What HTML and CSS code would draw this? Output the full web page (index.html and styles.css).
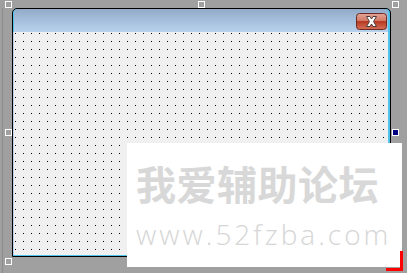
FILE: index.html
```html
<!DOCTYPE html>
<html>
<head>
<meta charset="utf-8">
<link rel="stylesheet" href="styles.css">
</head>
<body>
<div class="canvas">
  <div class="guide"></div>
  <div class="form">
    <div class="titlebar">
      <div class="close">
        <svg width="31" height="17" viewBox="0 0 31 17">
          <defs>
            <linearGradient id="cg" x1="0" y1="0" x2="0" y2="1">
              <stop offset="0" stop-color="#e3a597"/>
              <stop offset="0.45" stop-color="#d27a66"/>
              <stop offset="0.5" stop-color="#b83a22"/>
              <stop offset="1" stop-color="#d5705a"/>
            </linearGradient>
          </defs>
          <rect x="0.5" y="0.5" width="30" height="16" rx="3" ry="3" fill="url(#cg)" stroke="#6b2a20"/>
          <path d="M10.5 3.5 L14 3.5 L15.5 6 L17 3.5 L20.5 3.5 L17.5 8.5 L20.5 13.5 L17 13.5 L15.5 11 L14 13.5 L10.5 13.5 L13.5 8.5 Z" fill="#ffffff" stroke="#4a3a38" stroke-width="1" stroke-linejoin="round"/>
        </svg>
      </div>
    </div>
    <div class="client"></div>
  </div>
  <span class="handle h-tl"></span>
  <span class="handle h-tm"></span>
  <span class="handle h-tr"></span>
  <span class="handle h-ml"></span>
  <span class="handle h-mr active"></span>
  <span class="handle h-bl"></span>
  <div class="watermark">
    <div class="wm-cn">我爱辅助论坛</div>
    <div class="wm-url">www.52fzba.com</div>
  </div>
  <span class="corner-v"></span>
  <span class="corner-h"></span>
</div>
</body>
</html>
```
FILE: styles.css
```css
html, body {
  margin: 0;
  padding: 0;
}
body {
  width: 407px;
  height: 273px;
  overflow: hidden;
  background: #a0a0a0;
}
.canvas {
  position: relative;
  width: 407px;
  height: 273px;
  box-sizing: border-box;
  padding: 8px 0 0 12px;
}
.guide {
  position: absolute;
  left: 2px;
  top: 8px;
  bottom: 0;
  width: 1px;
  background: #8c8c8c;
}
.form {
  width: 379px;
  height: 249px;
  box-sizing: border-box;
  border: 1px solid #000;
  border-radius: 5px 5px 0 0;
  background: #4fc3ec;
  display: flex;
  flex-direction: column;
  overflow: hidden;
}
.titlebar {
  height: 23px;
  flex: none;
  margin: 0 2px 0 1px;
  background: linear-gradient(#93abc9, #b8d2ee);
  display: flex;
  justify-content: flex-end;
  align-items: flex-start;
  padding: 4px 1px 0 0;
  box-sizing: border-box;
  border-radius: 4px 4px 0 0;
}
.close {
  width: 31px;
  height: 17px;
}
.close svg {
  display: block;
}
.client {
  flex: 1;
  margin: 0 2px 1px 0;
  border-left: 1px solid #b9d1ea;
  background-color: #f0f0f0;
  background-image:
    linear-gradient(90deg, #f0f0f0 7px, transparent 7px),
    linear-gradient(#f0f0f0 7px, #000 7px);
  background-size: 8px 8px;
  background-position: 2px 2px;
  background-clip: content-box;
  background-origin: content-box;
}
.handle {
  position: absolute;
  width: 7px;
  height: 7px;
  box-sizing: border-box;
  border: 1px solid #fff;
}
.handle.active {
  background: #000080;
}
.h-tl { left: 5px; top: 1px; }
.h-tm { left: 198px; top: 1px; }
.h-tr { left: 392px; top: 1px; }
.h-ml { left: 5px; top: 129px; }
.h-mr { left: 392px; top: 129px; }
.h-bl { left: 5px; top: 258px; }
.watermark {
  position: absolute;
  left: 127px;
  top: 143px;
  width: 275px;
  height: 124px;
  background: #fff;
  box-sizing: border-box;
  padding: 20px 0 0 9px;
}
.wm-cn {
  font-family: "Noto Sans CJK SC", sans-serif;
  font-weight: 700;
  font-size: 40px;
  line-height: 40px;
  letter-spacing: 0.5px;
  color: #d8d8d8;
  white-space: nowrap;
}
.wm-url {
  margin-top: 19px;
  font-family: "Open Sans", sans-serif;
  font-weight: 300;
  font-size: 28px;
  line-height: 24px;
  letter-spacing: 3px;
  color: #d6d6d6;
  white-space: nowrap;
}
.corner-v {
  position: absolute;
  left: 400px;
  top: 251px;
  width: 3px;
  height: 20px;
  background: #ff0000;
}
.corner-h {
  position: absolute;
  left: 386px;
  top: 268px;
  width: 17px;
  height: 3px;
  background: #ff0000;
}
```
